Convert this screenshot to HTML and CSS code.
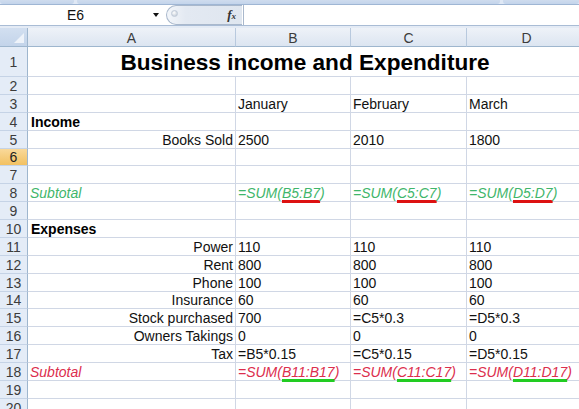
FILE: index.html
```html
<!DOCTYPE html>
<html>
<head>
<meta charset="utf-8">
<link rel="stylesheet" href="styles.css">
</head>
<body>
<div class="app">
  <div class="ribbon-edge"><span class="seg s1"></span><span class="seg s2"></span><span class="seg s3"></span></div>
  <div class="formula-bar">
    <div class="name-box"><span class="name">E6</span><span class="dd"></span></div>
    <div class="fx-area"><div class="pill"><span class="knob"></span><span class="fx">f<span class="fx-x">x</span></span></div></div>
    <div class="formula-input"></div>
  </div>
  <div class="gap"></div>
  <div class="sheet">
    <div class="corner"><span class="tri"></span></div>
    <div class="colh">A</div><div class="colh">B</div><div class="colh">C</div><div class="colh">D</div>

    <div class="rowh">1</div><div class="c title">Business income and Expenditure</div>

    <div class="rowh">2</div><div class="c"></div><div class="c"></div><div class="c"></div><div class="c"></div>

    <div class="rowh">3</div><div class="c"></div><div class="c">January</div><div class="c">February</div><div class="c">March</div>

    <div class="rowh">4</div><div class="c b">Income</div><div class="c"></div><div class="c"></div><div class="c"></div>

    <div class="rowh">5</div><div class="c r">Books Sold</div><div class="c">2500</div><div class="c">2010</div><div class="c">1800</div>

    <div class="rowh sel">6</div><div class="c"></div><div class="c"></div><div class="c"></div><div class="c"></div>

    <div class="rowh">7</div><div class="c"></div><div class="c"></div><div class="c"></div><div class="c"></div>

    <div class="rowh">8</div><div class="c green">Subtotal</div><div class="c green">=SUM(<span class="ul-red">B5:B7</span>)</div><div class="c green">=SUM(<span class="ul-red">C5:C7</span>)</div><div class="c green">=SUM(<span class="ul-red">D5:D7</span>)</div>

    <div class="rowh">9</div><div class="c"></div><div class="c"></div><div class="c"></div><div class="c"></div>

    <div class="rowh">10</div><div class="c b">Expenses</div><div class="c"></div><div class="c"></div><div class="c"></div>

    <div class="rowh">11</div><div class="c r">Power</div><div class="c">110</div><div class="c">110</div><div class="c">110</div>

    <div class="rowh">12</div><div class="c r">Rent</div><div class="c">800</div><div class="c">800</div><div class="c">800</div>

    <div class="rowh">13</div><div class="c r">Phone</div><div class="c">100</div><div class="c">100</div><div class="c">100</div>

    <div class="rowh">14</div><div class="c r">Insurance</div><div class="c">60</div><div class="c">60</div><div class="c">60</div>

    <div class="rowh">15</div><div class="c r">Stock purchased</div><div class="c">700</div><div class="c">=C5*0.3</div><div class="c">=D5*0.3</div>

    <div class="rowh">16</div><div class="c r">Owners Takings</div><div class="c">0</div><div class="c">0</div><div class="c">0</div>

    <div class="rowh">17</div><div class="c r">Tax</div><div class="c">=B5*0.15</div><div class="c">=C5*0.15</div><div class="c">=D5*0.15</div>

    <div class="rowh">18</div><div class="c red">Subtotal</div><div class="c red">=SUM(<span class="ul-green">B11:B17</span>)</div><div class="c red">=SUM(<span class="ul-green">C11:C17</span>)</div><div class="c red">=SUM(<span class="ul-green">D11:D17</span>)</div>

    <div class="rowh">19</div><div class="c"></div><div class="c"></div><div class="c"></div><div class="c"></div>

    <div class="rowh">20</div><div class="c"></div><div class="c"></div><div class="c"></div><div class="c"></div>
  </div>
</div>
</body>
</html>
```

FILE: styles.css
```css
* { box-sizing: border-box; }
html, body { margin: 0; padding: 0; background: #fff; }
body { font-family: "Liberation Sans", Arial, sans-serif; }

.app {
  width: 579px;
  height: 409px;
  overflow: hidden;
  background: #fff;
}

/* bottom edge of the ribbon */
.ribbon-edge {
  height: 5px;
  display: flex;
  gap: 3px;
  background: #dfe8f5;
  border-bottom: 1px solid #9fb6d4;
}
.seg {
  height: 100%;
  background: linear-gradient(#cfdcee, #c3d4eb);
  border-radius: 0 0 3px 3px;
}
.s1 { width: 74px; }
.s2 { width: 423px; }
.s3 { flex: 1; }

/* formula bar */
.formula-bar {
  height: 21px;
  display: flex;
  background: #fff;
  border-bottom: 1px solid #a9bcd5;
}
.name-box {
  width: 162px;
  display: flex;
  align-items: center;
  font-size: 14px;
  color: #111;
}
.name {
  flex: 1;
  text-align: center;
  padding-right: 2px;
}
.dd {
  width: 0;
  height: 0;
  border-left: 3px solid transparent;
  border-right: 3px solid transparent;
  border-top: 4px solid #111;
  margin-right: 3px;
}
.fx-area {
  width: 81px;
  display: flex;
  padding: 0 1px 0 4px;
  background: #fff;
}
.pill {
  flex: 1;
  display: flex;
  align-items: center;
  justify-content: space-between;
  border: 1px solid #a9b8cc;
  border-right: none;
  border-radius: 11px 0 0 11px;
  background: linear-gradient(90deg, #f3f6fa 0%, #e3e9f2 25%, #dfe6ef 100%);
  padding: 0 6px 0 4px;
}
.knob {
  width: 7px;
  height: 7px;
  border-radius: 50%;
  background: radial-gradient(circle at 40% 35%, #ffffff, #b7c2d0);
  border: 1px solid #c0cad8;
  margin-bottom: 3px;
}
.fx {
  font-family: "Liberation Serif", "Times New Roman", serif;
  font-style: italic;
  font-weight: bold;
  font-size: 13px;
  color: #333;
}
.fx-x { font-size: 9px; }
.formula-input {
  flex: 1;
  background: #fff;
  border-left: 1px solid #a9b8cc;
}

.gap {
  height: 2px;
  background: #e4ebf5;
}

/* sheet */
.sheet {
  display: grid;
  grid-template-columns: 28px 208px 115px 116px 120px;
  grid-template-rows: 19px 30px repeat(19, 17.88px);
  font-size: 14px;
  color: #111;
}
.corner {
  background: linear-gradient(#d2dff0, #c3d4ea);
  border-right: 1px solid #9eb6ce;
  border-bottom: 1px solid #9eb6ce;
  position: relative;
}
.tri {
  position: absolute;
  right: 3px;
  bottom: 3px;
  width: 0;
  height: 0;
  border-left: 10px solid transparent;
  border-bottom: 10px solid #eef3fa;
}
.colh {
  background: linear-gradient(#eef2f8, #dce5f1);
  border-right: 1px solid #b8c9de;
  border-bottom: 1px solid #9eb6ce;
  display: flex;
  align-items: center;
  justify-content: center;
  color: #3c3c3c;
  padding-top: 1px;
}
.rowh {
  background: #e4ecf7;
  border-right: 1px solid #9eb6ce;
  border-bottom: 1px solid #c5d3e6;
  display: flex;
  align-items: center;
  justify-content: center;
  color: #3c3c3c;
  padding-top: 1px;
}
.rowh.sel {
  background: linear-gradient(#f9d99a, #f2c162);
  color: #222;
}
.c {
  border-right: 1px solid #d0d7e5;
  border-bottom: 1px solid #d0d7e5;
  display: flex;
  align-items: center;
  padding: 1px 2px 0 2px;
  white-space: nowrap;
  overflow: visible;
}
.c.title {
  grid-column: 2 / 6;
  justify-content: center;
  font-weight: bold;
  font-size: 22.6px;
  color: #000;
  padding-right: 6px;
  padding-top: 2px;
}
.c.r { justify-content: flex-end; }
.c.b { font-weight: bold; padding-left: 3px; color: #000; }
.c.green { color: #3fb66b; font-style: italic; }
.c.red { color: #dc2e4d; font-style: italic; }
.ul-red {
  text-decoration: underline;
  text-decoration-color: #dd1111;
  text-decoration-thickness: 3px;
  text-underline-offset: 2px;
}
.ul-green {
  text-decoration: underline;
  text-decoration-color: #22cc22;
  text-decoration-thickness: 3px;
  text-underline-offset: 2px;
}
```
